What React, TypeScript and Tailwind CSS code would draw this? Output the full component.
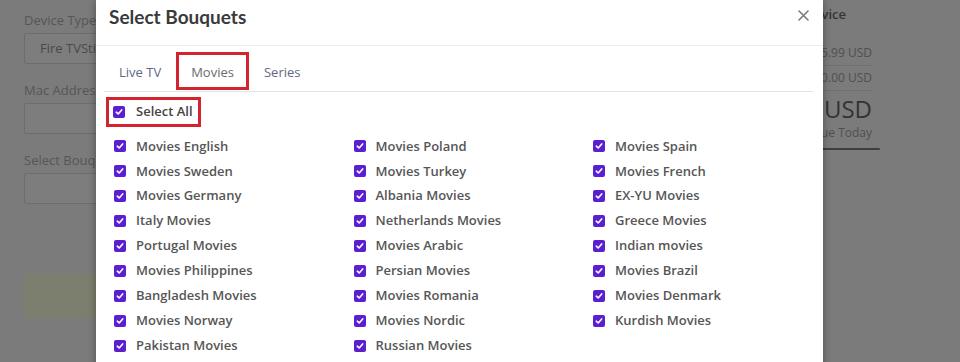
import React from 'react';

const COLUMNS: string[][] = [
  ['Movies English', 'Movies Sweden', 'Movies Germany', 'Italy Movies', 'Portugal Movies', 'Movies Philippines', 'Bangladesh Movies', 'Movies Norway', 'Pakistan Movies'],
  ['Movies Poland', 'Movies Turkey', 'Albania Movies', 'Netherlands Movies', 'Movies Arabic', 'Persian Movies', 'Movies Romania', 'Movies Nordic', 'Russian Movies'],
  ['Movies Spain', 'Movies French', 'EX-YU Movies', 'Greece Movies', 'Indian movies', 'Movies Brazil', 'Movies Denmark', 'Kurdish Movies'],
];

function Check() {
  return (
    <span className="w-[12px] h-[12px] rounded-[2px] bg-[#5a1fd1] flex items-center justify-center shrink-0">
      <svg width="8" height="8" viewBox="0 0 8 8" fill="none">
        <path d="M1.3 4.2 L3.2 6 L6.7 1.9" stroke="white" strokeWidth="1.6" strokeLinecap="round" strokeLinejoin="round" />
      </svg>
    </span>
  );
}

function Field({ label, value }: { label: string; value?: string }) {
  return (
    <div className="flex flex-col">
      <span className="text-[13px] leading-[18px] text-[#565656]">{label}</span>
      <div className="mt-[4px] h-[31px] border border-[#6d6d6d] rounded-[2px] bg-[#7d7d7d] flex items-center pl-[15px] text-[13px] text-[#4a4a4a]">
        {value}
      </div>
    </div>
  );
}

export default function App() {
  return (
    <div className="relative w-[960px] h-[362px] overflow-hidden bg-[#7b7b7b]" style={{ fontFamily: '"Open Sans", "Liberation Sans", sans-serif' }}>
      {/* page under the dim overlay */}
      <div className="flex pl-[24px] pt-[11px]">
        <div className="w-[420px] flex flex-col gap-[17px]">
          <Field label="Device Type" value="Fire TVStick" />
          <Field label="Mac Address" />
          <Field label="Select Bouquets" />
          <div className="mt-[53px] h-[44px] rounded-[2px] bg-[#7c7e6e]" />
        </div>
        <div className="ml-auto mr-[80px] w-[250px] flex flex-col items-end text-[#505050]">
          <div className="w-full text-right pr-[34px] text-[13px] font-semibold text-[#343434] leading-[18px] mt-[-6px]">Price For Device</div>
          <div className="w-full pr-[8px] flex flex-col items-end mt-[18px]">
            <div className="w-full text-right text-[12px] leading-[24px] border-b border-[#707070]">$15.99 USD</div>
            <div className="w-full text-right text-[12px] leading-[24px] border-b border-[#707070]">$0.00 USD</div>
            <div className="text-[24px] leading-[24px] text-[#333] mt-[6px]">$15.99 USD</div>
            <div className="text-[12px] leading-[16px] mt-[4px]">Due Today</div>
          </div>
          <div className="w-full h-[2px] bg-[#3e3e3e] mt-[7px] rounded-full" />
        </div>
      </div>

      {/* modal */}
      <div className="absolute top-0 left-[96px] w-[727px] h-[380px] bg-white shadow-[0_0_8px_rgba(0,0,0,0.35)]">
        <div className="h-[46px] border-b border-[#ececec] flex items-start justify-between pl-[13px] pr-[14px] pt-[4px]">
          <h2 className="text-[19px] leading-[26px] font-bold text-[#3a3a3a]" style={{ fontFamily: 'Lato, "Open Sans", sans-serif' }}>
            Select Bouquets
          </h2>
          <svg className="mt-[6px]" width="11" height="11" viewBox="0 0 11 11" fill="none">
            <path d="M1 1 L10 10 M10 1 L1 10" stroke="#7a7a7a" strokeWidth="1.6" strokeLinecap="round" />
          </svg>
        </div>
        <div className="px-[8px]">
          <div className="flex h-[46px] border-b border-[#e3e3e3] items-end pb-[1px] w-[709px]">
            {['Live TV', 'Movies', 'Series'].map((t) => (
              <div
                key={t}
                className={`h-[38px] px-[12px] flex items-center text-[13px] border-[3px] ${
                  t === 'Movies' ? 'border-[#d2232e] text-[#6a6a6a]' : 'border-transparent text-[#626886]'
                }`}
              >
                <span className="mt-[3px]">{t}</span>
              </div>
            ))}
          </div>
          <div className="mt-[5px] ml-[2px] inline-flex items-center h-[30px] border-[3px] border-[#d2232e] pl-[4px] pr-[5px] gap-[11px]">
            <Check />
            <span className="text-[13px] font-semibold text-[#444]">Select All</span>
          </div>
          <div className="flex mt-[7px] ml-[10px] w-[720px]">
            {COLUMNS.map((col, i) => (
              <div key={i} className="w-[239.5px] shrink-0 flex flex-col">
                {col.map((name) => (
                  <div key={name} className="h-[24.9px] flex items-center gap-[10px]">
                    <Check />
                    <span className="text-[13px] font-semibold text-[#565656]">{name}</span>
                  </div>
                ))}
              </div>
            ))}
          </div>
        </div>
      </div>
    </div>
  );
}
